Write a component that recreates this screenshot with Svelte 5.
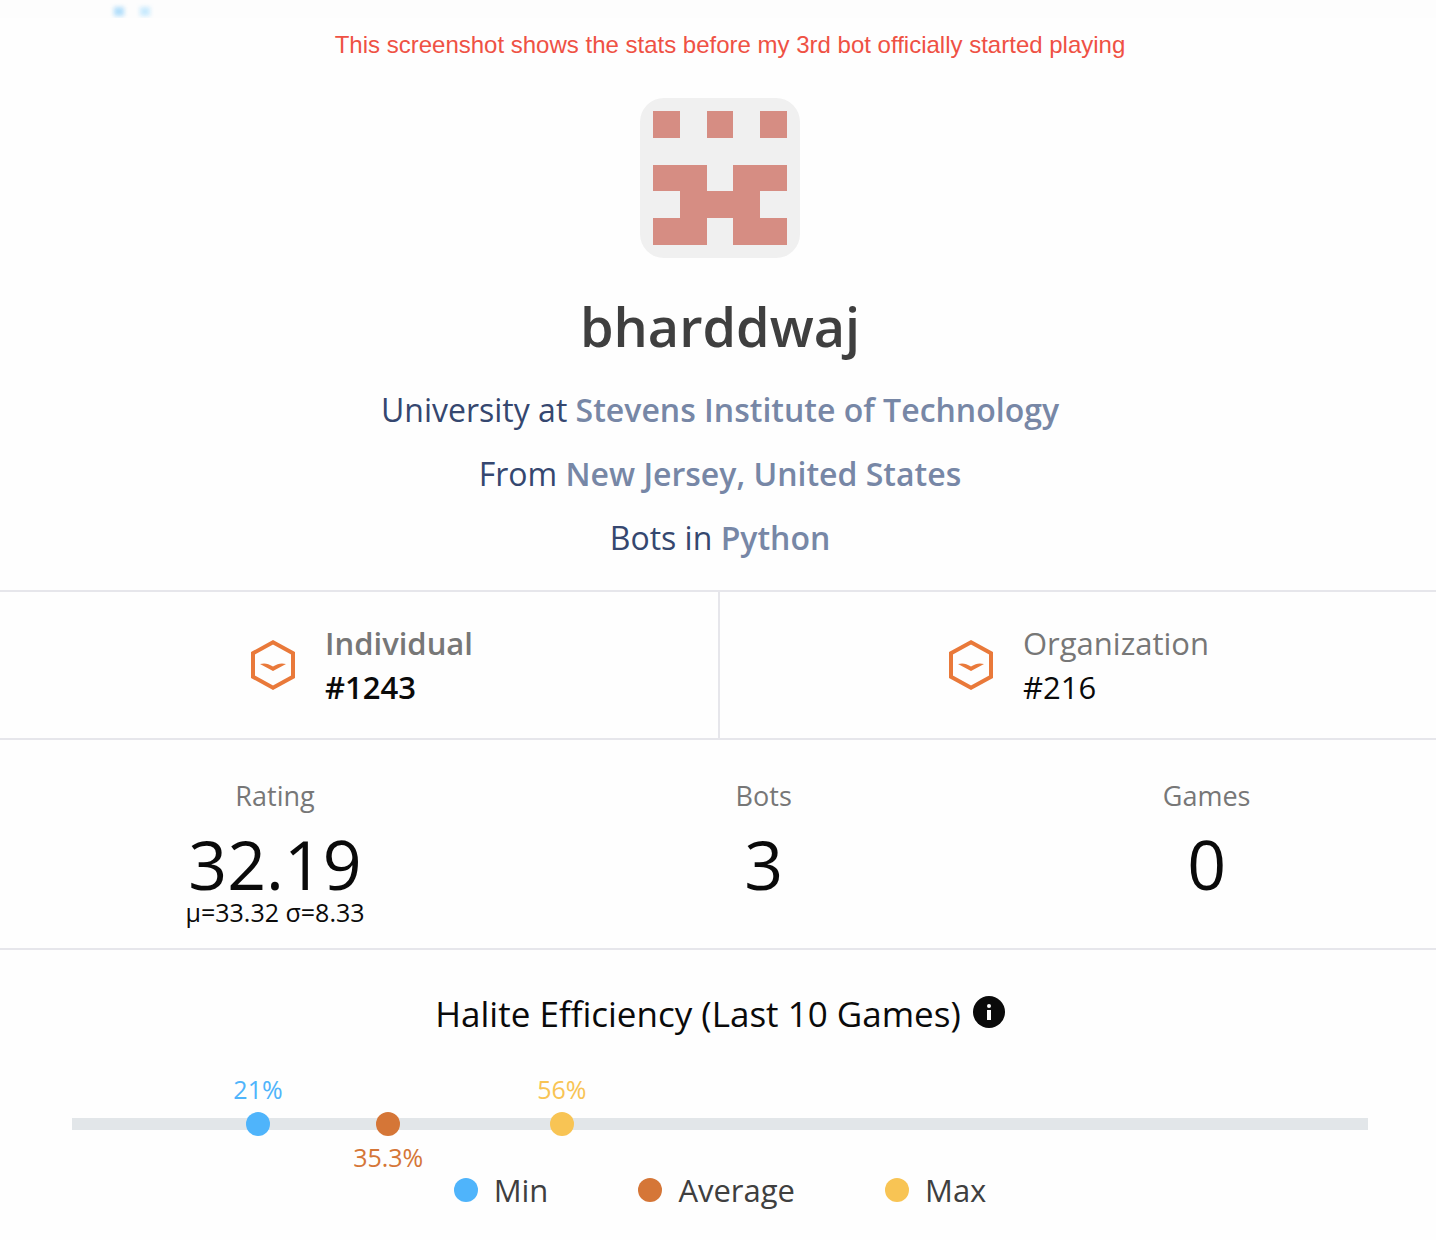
<script>
  const details = [
    { label: 'University at', value: 'Stevens Institute of Technology' },
    { label: 'From', value: 'New Jersey, United States' },
    { label: 'Bots in', value: 'Python' }
  ];
  const ranks = [
    { label: 'Individual', rank: '#1243', strong: true },
    { label: 'Organization', rank: '#216', strong: false }
  ];
  const stats = [
    { label: 'Rating', value: '32.19', note: 'μ=33.32 σ=8.33' },
    { label: 'Bots', value: '3' },
    { label: 'Games', value: '0' }
  ];
  const markers = [
    { kind: 'min', name: 'Min', value: '21%', at: 14.35 },
    { kind: 'avg', name: 'Average', value: '35.3%', at: 24.4 },
    { kind: 'max', name: 'Max', value: '56%', at: 37.8 }
  ];
  // Filled cells of the 5×5 identicon, row by row
  const rows = ['10101', '00000', '11011', '01110', '11011'];
  const cells = rows.flatMap((row, y) =>
    [...row].flatMap((c, x) => (c === '1' ? [{ x, y }] : []))
  );
</script>

<main>
  <div class="strip" aria-hidden="true"><i></i><i class="pale"></i></div>

  <header>
    <p class="notice">This screenshot shows the stats before my 3rd bot officially started playing</p>
    <svg class="avatar" viewBox="0 0 6 6" shape-rendering="crispEdges" role="img" aria-label="bharddwaj avatar">
      {#each cells as c}
        <rect x={c.x + 0.5} y={c.y + 0.5} width="1" height="1" />
      {/each}
    </svg>
    <h1>bharddwaj</h1>
    {#each details as d}
      <p class="detail">{d.label} <a href="#profile">{d.value}</a></p>
    {/each}
  </header>

  <section class="ranks">
    {#each ranks as r}
      <div class="rank" class:strong={r.strong}>
        <svg class="tier" viewBox="0 0 48 52" aria-hidden="true">
          <path class="hex" d="M24 3.3 44 14.3V37.7L24 48.7 4 37.7V14.3Z" />
          <path class="wing" d="M11 25C16 23.6 19 24.6 24 27.6C29 24.6 32 23.6 37 25L24 32Z" />
        </svg>
        <div>
          <p class="muted">{r.label}</p>
          <p>{r.rank}</p>
        </div>
      </div>
    {/each}
  </section>

  <section class="stats">
    {#each stats as s}
      <div>
        <p class="label">{s.label}</p>
        <p class="number">{s.value}</p>
        {#if s.note}<p class="note">{s.note}</p>{/if}
      </div>
    {/each}
  </section>

  <section class="efficiency">
    <h2>
      Halite Efficiency (Last 10 Games)
      <button aria-label="About Halite Efficiency">
        <svg viewBox="0 0 32 32" aria-hidden="true">
          <circle cx="16" cy="16" r="16" />
          <path d="M14 14h4v10h-4zM14 10a2 2 0 1 1 4 0a2 2 0 1 1-4 0z" />
        </svg>
      </button>
    </h2>
    <div class="track">
      {#each markers as m}
        <div class="marker {m.kind}" style:left="{m.at}%"><span>{m.value}</span></div>
      {/each}
    </div>
    <ul>
      {#each markers as m}
        <li><i class={m.kind}></i>{m.name}</li>
      {/each}
    </ul>
  </section>
</main>

<style>
  :global(body) {
    margin: 0;
    background: #fefefe;
  }
  main {
    font-family: 'Open Sans', 'Noto Sans', sans-serif;
    font-size: 31px;
    line-height: 44px;
    color: #0a0a0a;
  }
  p,
  h1,
  h2,
  ul {
    margin: 0;
    padding: 0;
    font-weight: 400;
  }
  .strip {
    display: flex;
    gap: 16px;
    height: 11px;
    padding: 7px 0 0 114px;
    overflow: hidden;
    background: #fdfdfd;
  }
  .strip i {
    width: 10px;
    height: 9px;
    background: #b2defa;
    filter: blur(2px);
  }
  .strip .pale {
    background: #c9eafd;
  }
  header {
    display: flex;
    flex-direction: column;
    align-items: center;
    padding: 11px 0 20px 4px;
    text-align: center;
    border-bottom: 2px solid #e6e6eb;
  }
  .notice {
    padding: 0 0 37px 20px;
    font-family: 'Liberation Sans', sans-serif;
    font-size: 24px;
    line-height: 32px;
    color: #ef5144;
  }
  .avatar {
    width: 160px;
    height: 160px;
    border-radius: 24px;
    background: #f0f0f0;
    fill: #d68d83;
  }
  h1 {
    padding: 32px 0 16px;
    font-size: 54px;
    line-height: 72px;
    font-weight: 600;
    color: #3f3f3f;
  }
  .detail {
    font-size: 32px;
    line-height: 64px;
    color: #35476f;
  }
  .detail a {
    color: #7787a6;
    font-weight: 600;
    text-decoration: none;
  }
  .ranks {
    display: grid;
    grid-template-columns: 1fr 1fr;
    padding-left: 4px;
    border-bottom: 2px solid #e6e6eb;
  }
  .rank {
    display: flex;
    justify-content: center;
    align-items: center;
    gap: 28px;
    padding: 29px 0;
  }
  .rank:first-child {
    border-right: 2px solid #e6e6eb;
  }
  .strong p {
    font-weight: 600;
  }
  .rank .muted,
  .label {
    color: #777;
  }
  .tier {
    width: 48px;
    height: 52px;
  }
  .hex {
    fill: none;
    stroke: #e9793a;
    stroke-width: 4;
  }
  .wing {
    fill: #e9793a;
  }
  .stats {
    display: flex;
    justify-content: space-around;
    padding: 36px 0 24px;
    text-align: center;
    border-bottom: 2px solid #e6e6eb;
  }
  .label {
    font-size: 27px;
    line-height: 40px;
  }
  .number {
    padding-top: 12px;
    font-size: 68px;
    line-height: 72px;
  }
  .note {
    font-size: 25px;
    line-height: 24px;
  }
  .efficiency {
    padding: 40px 68px 24px 72px;
  }
  h2 {
    display: flex;
    justify-content: center;
    align-items: center;
    gap: 12px;
    font-size: 35px;
    line-height: 48px;
  }
  button {
    display: flex;
    height: 36px;
    padding: 0;
    border: 0;
    background: none;
  }
  button svg {
    width: 32px;
    height: 32px;
    fill: #0a0a0a;
  }
  button path {
    fill: #fefefe;
  }
  .track {
    position: relative;
    height: 12px;
    margin: 80px 0 38px;
    background: #e2e6e9;
  }
  .marker {
    position: absolute;
    top: -6px;
    width: 24px;
    height: 24px;
    margin-left: -12px;
    border-radius: 50%;
    display: flex;
    justify-content: center;
    font-size: 25px;
    line-height: 32px;
  }
  .marker span {
    position: absolute;
    bottom: 31px;
  }
  .marker.avg span {
    top: 29px;
    bottom: auto;
  }
  .min {
    background: #4fb4fb;
    color: #4fb4fb;
  }
  .avg {
    background: #d57637;
    color: #d57637;
  }
  .max {
    background: #f8c454;
    color: #f8c454;
  }
  ul {
    display: flex;
    justify-content: center;
    gap: 90px;
    color: #3f3f3f;
    list-style: none;
  }
  li {
    display: flex;
    align-items: center;
    gap: 16px;
  }
  li i {
    width: 24px;
    height: 24px;
    border-radius: 50%;
  }
</style>
